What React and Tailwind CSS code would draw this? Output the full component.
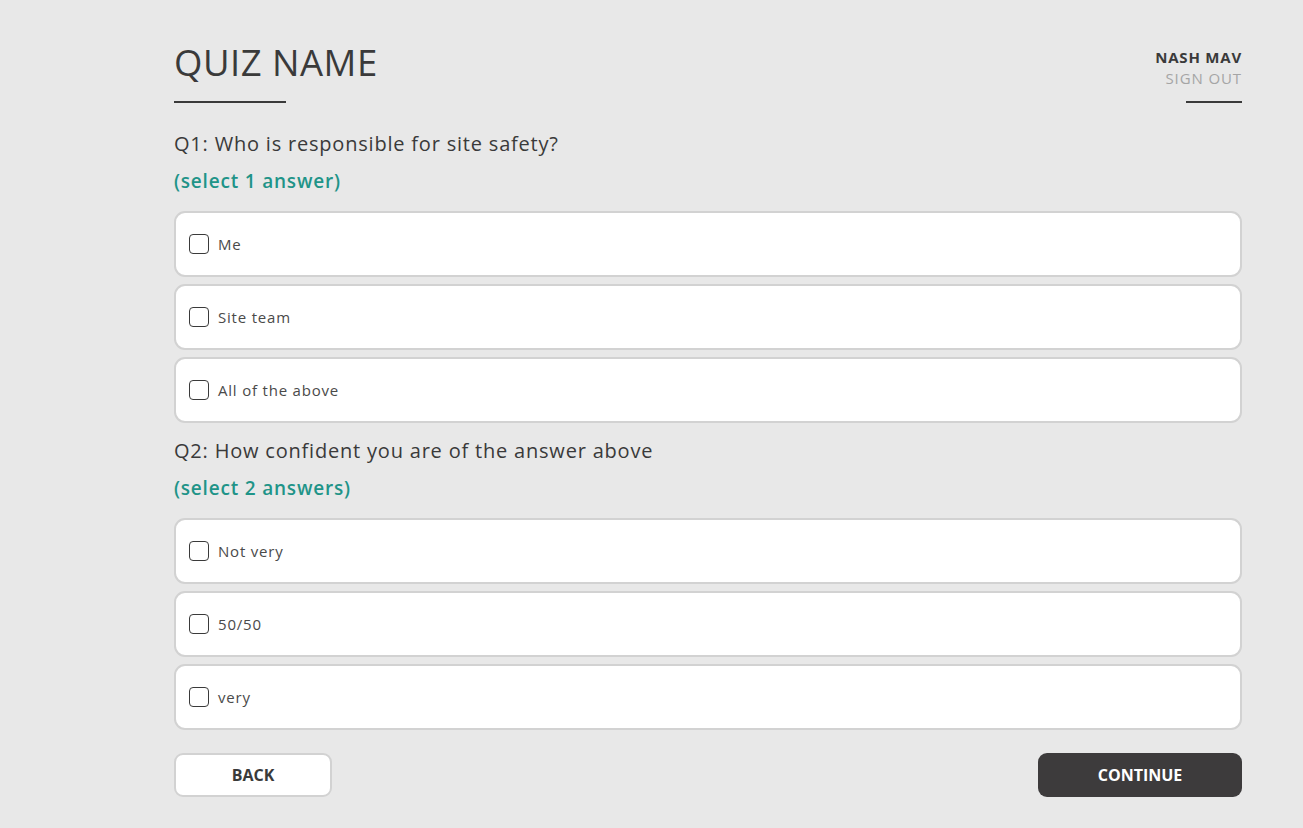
import React, { useState } from 'react';

const questions = [
  {
    id: 'q1',
    title: 'Q1: Who is responsible for site safety?',
    hint: '(select 1 answer)',
    options: ['Me', 'Site team', 'All of the above'],
  },
  {
    id: 'q2',
    title: 'Q2: How confident you are of the answer above',
    hint: '(select 2 answers)',
    options: ['Not very', '50/50', 'very'],
  },
];

const Option = ({ label, checked, onToggle }) => (
  <label className="flex items-center h-[66px] bg-white border-2 border-[#d2d2d2] rounded-[11px] px-[13px] cursor-pointer">
    <span className="w-[20px] h-[20px] border-[1.5px] border-[#3a3a3a] rounded-[4px] flex items-center justify-center shrink-0">
      {checked && <span className="w-[10px] h-[10px] bg-[#1f9488] rounded-[2px]" />}
    </span>
    <input type="checkbox" className="hidden" checked={checked} onChange={onToggle} />
    <span className="ml-[9px] text-[15px] text-[#4a4a4a] tracking-[0.8px]">{label}</span>
  </label>
);

export default function App() {
  const [answers, setAnswers] = useState({});

  const toggle = (key) => setAnswers((prev) => ({ ...prev, [key]: !prev[key] }));

  return (
    <div className="min-h-screen bg-[#e8e8e8] font-['Open_Sans',sans-serif] text-[#3a3a3a]">
      <div className="ml-[174px] w-[1068px] pt-[40px] pb-[30px]">
        {/* Header */}
        <div className="flex justify-between items-start">
          <div>
            <h1 className="text-[36.5px] leading-[44px] tracking-[0.5px] text-[#3a3a3a] font-normal">QUIZ NAME</h1>
            <div className="w-[112px] h-[2px] bg-[#3a3a3a] mt-[17px]" />
          </div>
          <div className="flex flex-col items-end pt-[7px]">
            <span className="text-[15px] leading-[20px] font-bold text-[#3a3a3a] tracking-[0.8px]">NASH MAV</span>
            <span className="text-[15px] leading-[22px] text-[#a5a5a5] tracking-[0.9px]">SIGN OUT</span>
            <div className="w-[56px] h-[2px] bg-[#3a3a3a] mt-[12px]" />
          </div>
        </div>

        {/* Questions */}
        {questions.map((q, qi) => (
          <div key={q.id} className={qi === 0 ? 'mt-[28px]' : 'mt-[15px]'}>
            <h2 className="text-[20px] leading-[26px] text-[#3a3a3a] tracking-[0.8px]">{q.title}</h2>
            <p className="text-[19px] leading-[26px] font-semibold text-[#1f9488] mt-[11px] tracking-[0.8px]">{q.hint}</p>
            <div className="flex flex-col gap-[7px] mt-[17px]">
              {q.options.map((opt) => (
                <Option
                  key={opt}
                  label={opt}
                  checked={!!answers[q.id + opt]}
                  onToggle={() => toggle(q.id + opt)}
                />
              ))}
            </div>
          </div>
        ))}

        {/* Actions */}
        <div className="flex justify-between mt-[23px]">
          <button className="w-[158px] h-[44px] bg-white border-2 border-[#d2d2d2] rounded-[9px] text-[16px] font-bold text-[#3a3a3a]">
            BACK
          </button>
          <button className="w-[204px] h-[44px] bg-[#3d3b3c] rounded-[9px] text-[16px] font-bold text-white">
            CONTINUE
          </button>
        </div>
      </div>
    </div>
  );
}
